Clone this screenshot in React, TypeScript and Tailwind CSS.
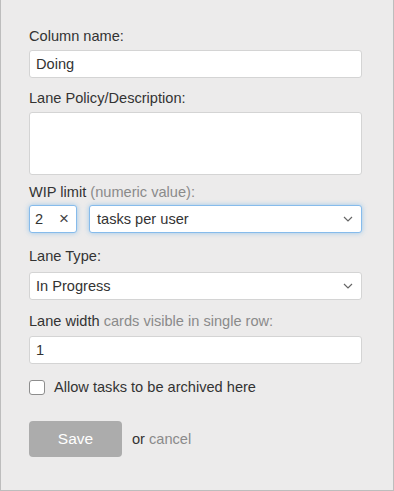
import React from "react";

const Chevron = () => (
  <svg width="10" height="6" viewBox="0 0 10 6" className="shrink-0">
    <polyline points="1,1 5,5 9,1" fill="none" stroke="#666" strokeWidth="1.2" />
  </svg>
);

export default function App() {
  return (
    <div
      className="w-[394px] h-[491px] bg-[#ecebeb] border-l border-r border-b border-[#bdbdbd] text-[#333] text-[14.6px] leading-[20px]"
      style={{ fontFamily: '"Liberation Sans", Arial, sans-serif' }}
    >
      <div className="flex flex-col pt-[26px] pl-[28px] w-[361px]">
        <label className="h-[20px]">Column name:</label>
        <div className="mt-[4px] h-[28px] bg-white border border-[#d4d4d4] rounded-[3px] flex items-center px-[6px]">
          Doing
        </div>

        <label className="mt-[10px] h-[20px]">Lane Policy/Description:</label>
        <div className="mt-[4px] h-[63px] bg-white border border-[#d4d4d4] rounded-[3px]" />

        <label className="mt-[7px] h-[20px]">
          WIP limit <span className="text-[#8a8a8a]">(numeric value):</span>
        </label>
        <div className="mt-[3px] flex gap-[12px]">
          <div className="w-[48px] h-[28px] bg-white border border-[#86bbeb] rounded-[3px] shadow-[0_0_5px_rgba(102,175,233,0.6)] flex items-center justify-between pl-[5px] pr-[7px]">
            <span>2</span>
            <span className="text-[17px] text-[#444]">×</span>
          </div>
          <div className="flex-1 h-[28px] bg-white border border-[#86bbeb] rounded-[3px] shadow-[0_0_5px_rgba(102,175,233,0.6)] flex items-center justify-between pl-[7px] pr-[8px]">
            <span>tasks per user</span>
            <Chevron />
          </div>
        </div>

        <label className="mt-[13px] h-[20px]">Lane Type:</label>
        <div className="mt-[6px] h-[28px] bg-white border border-[#d4d4d4] rounded-[3px] flex items-center justify-between pl-[6px] pr-[8px]">
          <span>In Progress</span>
          <Chevron />
        </div>

        <label className="mt-[11px] h-[20px]">
          Lane width <span className="text-[#8a8a8a]">cards visible in single row:</span>
        </label>
        <div className="mt-[5px] h-[28px] bg-white border border-[#d4d4d4] rounded-[3px] flex items-center px-[6px]">
          1
        </div>

        <div className="mt-[13px] flex items-center gap-[9px] h-[20px]">
          <div className="w-[16px] h-[15px] bg-white border border-[#8d8d8d] rounded-[3px]" />
          <span>Allow tasks to be archived here</span>
        </div>

        <div className="mt-[24px] flex items-center gap-[10px]">
          <button className="w-[93px] h-[36px] bg-[#acacac] rounded-[4px] text-white text-[15.5px]">
            Save
          </button>
          <span>
            or <span className="text-[#8a8a8a]">cancel</span>
          </span>
        </div>
      </div>
    </div>
  );
}
